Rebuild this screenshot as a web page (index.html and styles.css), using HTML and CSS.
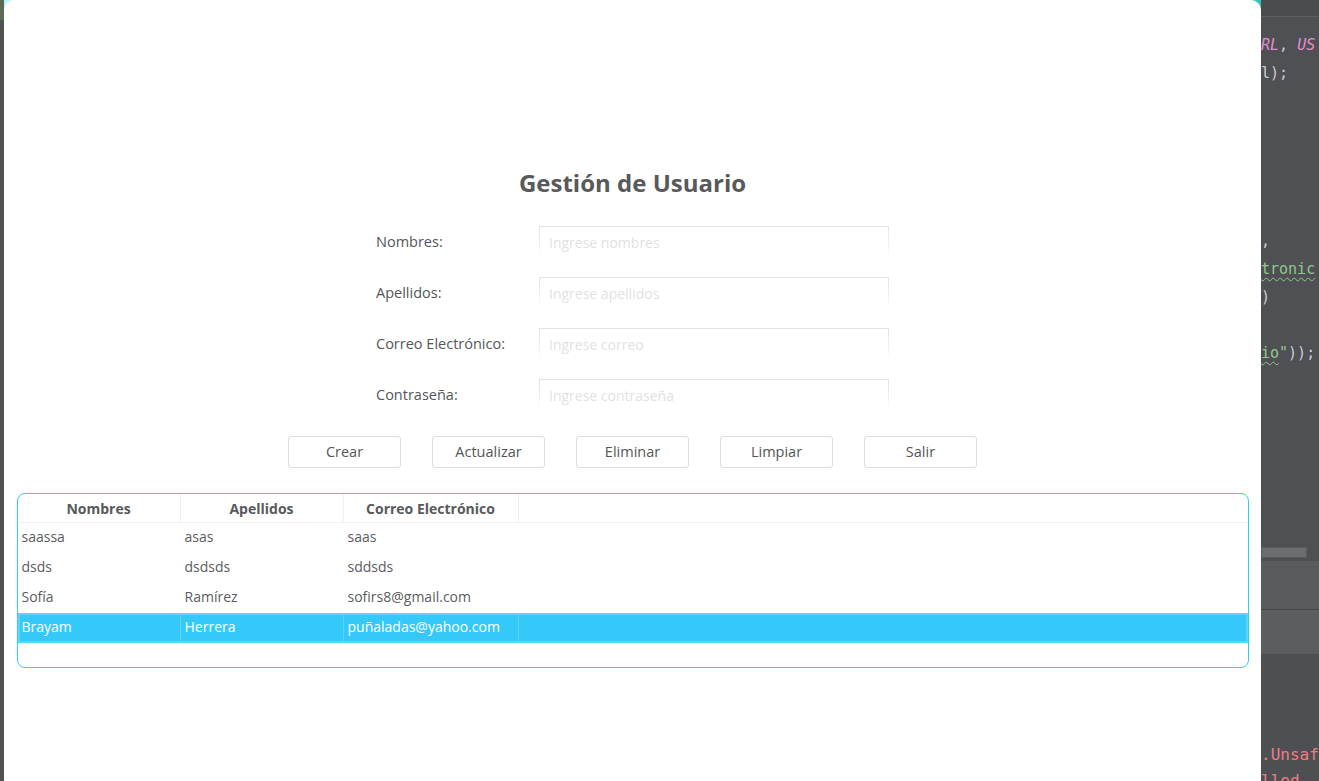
FILE: index.html
```html
<!DOCTYPE html>
<html lang="es">
<head>
<meta charset="utf-8">
<title>Gestión de Usuario</title>
<link rel="stylesheet" href="styles.css">
</head>
<body>
<div class="screen">
  <div class="left-strip"><div class="left-top"></div></div>
  <div class="window-wrap">
    <span class="corner-tl"></span>
    <span class="corner-tr"></span>
    <main class="window">
      <h1 class="title">Gestión de Usuario</h1>
      <form class="form">
        <label class="label">Nombres:</label>
        <input class="field" type="text" placeholder="Ingrese nombres">
        <label class="label">Apellidos:</label>
        <input class="field" type="text" placeholder="Ingrese apellidos">
        <label class="label">Correo Electrónico:</label>
        <input class="field" type="text" placeholder="Ingrese correo">
        <label class="label">Contraseña:</label>
        <input class="field" type="password" placeholder="Ingrese contraseña">
      </form>
      <div class="actions">
        <button class="btn">Crear</button>
        <button class="btn">Actualizar</button>
        <button class="btn">Eliminar</button>
        <button class="btn">Limpiar</button>
        <button class="btn">Salir</button>
      </div>
      <div class="table-box">
        <div class="row head">
          <div class="cell c1">Nombres</div>
          <div class="cell c2">Apellidos</div>
          <div class="cell c3">Correo Electrónico</div>
          <div class="cell rest"></div>
        </div>
        <div class="row">
          <div class="cell c1">saassa</div>
          <div class="cell c2">asas</div>
          <div class="cell c3">saas</div>
          <div class="cell rest"></div>
        </div>
        <div class="row">
          <div class="cell c1">dsds</div>
          <div class="cell c2">dsdsds</div>
          <div class="cell c3">sddsds</div>
          <div class="cell rest"></div>
        </div>
        <div class="row">
          <div class="cell c1">Sofía</div>
          <div class="cell c2">Ramírez</div>
          <div class="cell c3">sofirs8@gmail.com</div>
          <div class="cell rest"></div>
        </div>
        <div class="row selected">
          <div class="cell c1">Brayam</div>
          <div class="cell c2">Herrera</div>
          <div class="cell c3">puñaladas@yahoo.com</div>
          <div class="cell rest"></div>
        </div>
      </div>
    </main>
  </div>
  <aside class="ide">
    <div class="ide-top"></div>
    <div class="code">
      <div class="ln"><span class="kw">RL</span><span class="pl">, </span><span class="kw">US</span></div>
      <div class="ln pl">l);</div>
      <div class="ln"></div>
      <div class="ln"></div>
      <div class="ln"></div>
      <div class="ln"></div>
      <div class="ln"></div>
      <div class="ln pl">,</div>
      <div class="ln"><span class="str wavy">tronic</span></div>
      <div class="ln pl">)</div>
      <div class="ln"></div>
      <div class="ln"><span class="str wavy">io</span><span class="str">"</span><span class="pl">));</span></div>
    </div>
    <div class="ide-gap"></div>
    <div class="scrollbar"></div>
    <div class="panel-a"></div>
    <div class="panel-b"></div>
    <div class="ide-bottom">
      <div class="err">.Unsafe</div>
      <div class="err">lled</div>
    </div>
  </aside>
</div>
</body>
</html>
```
FILE: styles.css
```css
* { box-sizing: border-box; }
html, body { margin: 0; padding: 0; }
body {
  width: 1319px;
  height: 781px;
  overflow: hidden;
  background: #4d4e51;
  font-family: "Open Sans", "Liberation Sans", sans-serif;
}
.screen {
  display: flex;
  height: 781px;
}
.left-strip {
  width: 4px;
  background: #505152;
  flex: none;
}
.left-top {
  height: 20px;
  background: #5d6a58;
}
.window-wrap {
  position: relative;
  width: 1257px;
  flex: none;
  background: #4d4e51;
}
.corner-tl {
  position: absolute;
  left: 0; top: 0;
  width: 10px; height: 10px;
  background: #bff4f6;
}
.corner-tr {
  position: absolute;
  right: 0; top: 0;
  width: 10px; height: 10px;
  background: #35c4bc;
}
.window {
  position: relative;
  height: 781px;
  background: #ffffff;
  border-top-left-radius: 10px;
  border-top-right-radius: 10px;
  padding-top: 166px;
  display: flex;
  flex-direction: column;
  align-items: center;
}
.title {
  margin: 0;
  font-size: 24px;
  line-height: 34px;
  font-weight: 700;
  color: #58595b;
}
.form {
  margin-top: 26px;
  width: 513px;
  display: grid;
  grid-template-columns: 163px 350px;
  grid-auto-rows: 30px;
  row-gap: 21px;
  align-items: center;
}
.label {
  font-size: 14.5px;
  color: #555659;
  padding-top: 1px;
}
.field {
  height: 30px;
  width: 350px;
  border: 1px solid transparent;
  border-image: linear-gradient(to bottom, #e2e2e2 0%, #efefef 60%, #ffffff 100%) 1;
  background: #fff;
  padding: 3px 9px 0;
  font-family: inherit;
  font-size: 14px;
  color: #555;
  outline: none;
}
.field::placeholder {
  color: #e4dfe2;
}
.actions {
  margin-top: 27px;
  display: flex;
  gap: 31px;
}
.btn {
  width: 113px;
  height: 32px;
  background: #fff;
  border: 1px solid #dcdcdc;
  border-radius: 3px;
  font-family: inherit;
  font-size: 14.5px;
  color: #555659;
  padding: 0 0 2px;
}
.table-box {
  margin-top: 25px;
  width: 1232px;
  height: 175px;
  border: 1.5px solid #33cff8;
  border-radius: 8px;
  overflow: hidden;
  background: #fff;
}
.row {
  display: flex;
  height: 30px;
  align-items: stretch;
}
.head { height: 29px; }
.cell {
  font-size: 14px;
  color: #5b5c5e;
  padding-left: 4px;
  padding-bottom: 3px;
  display: flex;
  align-items: center;
  white-space: nowrap;
}
.c1 { width: 163px; }
.c2 { width: 163px; }
.c3 { width: 175px; }
.rest { flex: 1; }
.head {
  border-bottom: 1px solid #f1f1f1;
}
.head .cell {
  justify-content: center;
  padding-left: 0;
  padding-bottom: 0;
  font-weight: 700;
  color: #58595b;
  border-right: 1px solid #f1f1f1;
}
.head .rest { border-right: none; }
.selected {
  background: #35c9fa;
  box-shadow: inset 0 0 0 2px #5bd5fb;
}
.selected .cell {
  color: #ffffff;
  border-right: 1px solid #5bd5fb;
}
.selected .rest { border-right: none; }
.ide {
  width: 58px;
  flex: none;
  background: #4f5054;
  overflow: hidden;
  display: flex;
  flex-direction: column;
}
.ide-top {
  height: 17px;
  flex: none;
  background: #4b4c50;
  border-bottom: 1px solid #5e5f63;
}
.code {
  padding-top: 14px;
  font-family: "DejaVu Sans Mono", "Liberation Mono", monospace;
  font-size: 15px;
  white-space: nowrap;
}
.ln {
  height: 28px;
  line-height: 28px;
  color: #c9ccd2;
}
.pl { color: #c9ccd2; }
.kw { color: #e38bd0; font-style: italic; }
.str { color: #8fc98a; }
.wavy {
  text-decoration: underline wavy #8fc98a;
  text-underline-offset: 3px;
  text-decoration-thickness: 1px;
}
.ide-gap { height: 180px; flex: none; }
.scrollbar {
  height: 11px;
  width: 46px;
  flex: none;
  background: #6c6d6f;
  border: 1px solid #5a5b5d;
}
.panel-a {
  margin-top: 3px;
  height: 49px;
  flex: none;
  background: #5a5b5f;
  border-bottom: 1px solid #47484b;
}
.panel-b {
  height: 44px;
  flex: none;
  background: #5c5d61;
}
.ide-bottom {
  flex: 1;
  background: #4e4f52;
  padding-top: 88px;
  font-family: "DejaVu Sans Mono", "Liberation Mono", monospace;
  font-size: 16px;
}
.err {
  height: 26px;
  line-height: 26px;
  color: #f07c82;
  white-space: nowrap;
}
```
